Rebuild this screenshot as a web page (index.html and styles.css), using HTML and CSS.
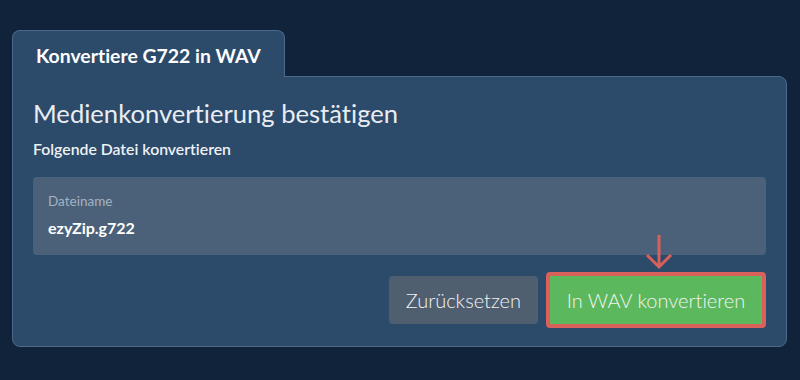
FILE: index.html
```html
<!DOCTYPE html>
<html lang="de">
<head>
    <meta charset="UTF-8">
    <meta name="viewport" content="width=device-width, initial-scale=1.0">
    <title>Konvertiere G722 in WAV</title>
    <link rel="stylesheet" href="styles.css">
</head>
<body>
    <div class="tab-bar">
        <div class="tab">Konvertiere G722 in WAV</div>
    </div>
    <div class="panel">
        <h1>Medienkonvertierung bestätigen</h1>
        <p class="subtitle">Folgende Datei konvertieren</p>
        <div class="file-box">
            <div class="file-label">Dateiname</div>
            <div class="file-name">ezyZip.g722</div>
        </div>
        <div class="actions">
            <button class="btn btn-reset">Zurücksetzen</button>
            <div class="highlight">
                <svg class="arrow" width="30" height="36" viewBox="0 0 30 36">
                    <path d="M15 1 V33 M3 21 L15 33 L27 21" fill="none" stroke="#d9605b" stroke-width="3"/>
                </svg>
                <button class="btn btn-convert">In WAV konvertieren</button>
            </div>
        </div>
    </div>
</body>
</html>
```

FILE: styles.css
```css
body { margin: 0; padding: 30px 12px 0; background-color: #10233a; font-family: Lato, "Open Sans", sans-serif; color: #e9edf2; font-variant-ligatures: no-common-ligatures; }
.tab-bar { display: flex; }
.tab { width: 273px; box-sizing: border-box; height: 47px; padding: 13px 0 0 23px; font-size: 19.4px; font-weight: bold; color: #fff; background-color: #2c4a6a; border: 1px solid #4d6888; border-bottom: none; border-radius: 8px 8px 0 0; margin-bottom: -1px; position: relative; z-index: 1; }
.panel { width: 775px; box-sizing: border-box; height: 271px; background-color: #2c4a6a; border: 1px solid #4d6888; border-radius: 0 8px 8px 8px; padding: 20px 20px 0; }
h1 { margin: 0; font-size: 25.6px; font-weight: normal; line-height: 32px; color: #e9edf2; }
.subtitle { margin: 10px 0 0; font-size: 15.8px; font-weight: 600; line-height: 20px; color: #eef1f4; }
.file-box { margin-top: 18px; height: 78px; box-sizing: border-box; background-color: #4b6179; border-radius: 4px; padding: 16px 0 0 15px; }
.file-label { font-size: 13.5px; color: #a6b2c0; line-height: 17px; }
.file-name { margin-top: 8px; font-size: 16px; font-weight: bold; color: #fff; line-height: 20px; }
.actions { display: flex; justify-content: flex-end; align-items: center; gap: 8px; margin-top: 17px; }
.btn { font-family: Lato, "Open Sans", sans-serif; font-size: 20px; font-weight: 300; height: 48px; border: none; border-radius: 4px; color: #f1f3f5; padding: 0 17px; font-variant-ligatures: no-common-ligatures; }
.btn-reset { background-color: #4f5f70; }
.highlight { position: relative; border: 4px solid #d9605b; border-radius: 4px; }
.btn-convert { display: block; background-color: #5cb85c; border-radius: 0; width: 212px; padding: 0; }
.arrow { position: absolute; left: 94px; top: -42px; }
```
